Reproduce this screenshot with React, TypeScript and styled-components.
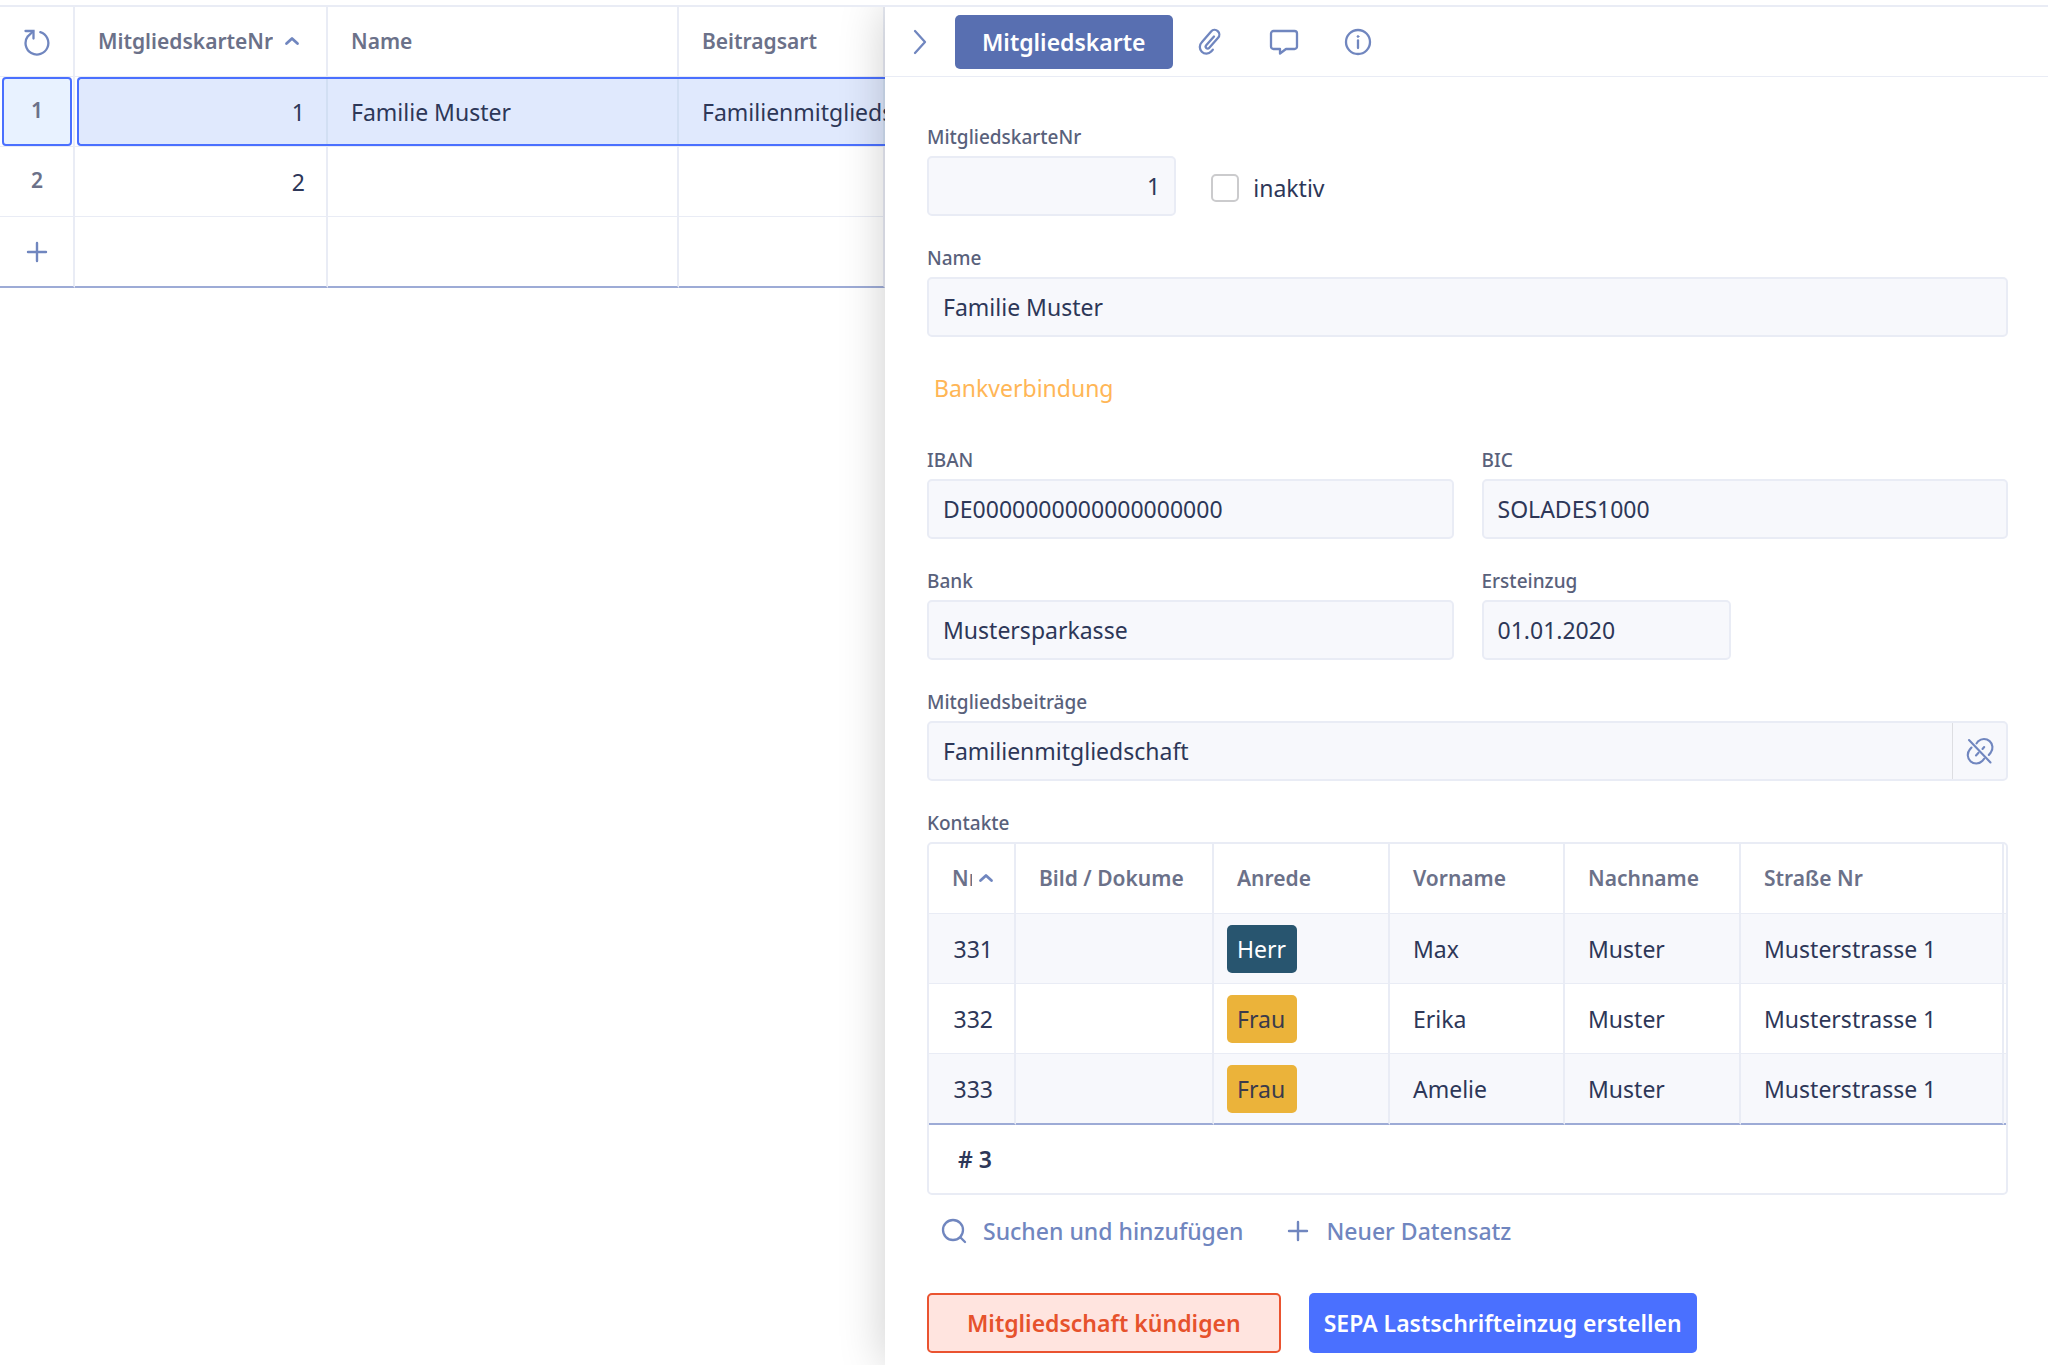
import React from "react";
import styled, { createGlobalStyle, css } from "styled-components";

const c = {
  line: "#e9ecf5",
  strongLine: "#9dabd6",
  ink: "#2d3758",
  head: "#6b7189",
  label: "#59617b",
  icon: "#7086bf",
  fieldBg: "#f7f8fc",
  accent: "#4a70ff",
};

const Global = createGlobalStyle`
  *, *::before, *::after { box-sizing: border-box; }
  body { margin: 0; background: #fff; }
  body, button, input {
    font-family: "Noto Sans", "Open Sans", sans-serif;
    font-size: 23px;
    color: ${c.ink};
  }
  button { margin: 0; padding: 0; border: 0; background: none; cursor: pointer; }
`;

const Page = styled.div`
  height: 100vh;
  padding-top: 5px;
  display: flex;
  flex-direction: column;
`;

const Workspace = styled.main`
  flex: 1;
  min-height: 0;
  display: grid;
  grid-template-columns: 885fr 1163fr;
  border-top: 2px solid ${c.line};
  overflow: hidden;
`;

const ListPane = styled.section`
  min-width: 0;
  overflow: hidden;
`;

const Panel = styled.aside`
  min-width: 0;
  min-height: 0;
  display: flex;
  flex-direction: column;
  background: #fff;
  box-shadow: 0 0 44px rgba(0, 0, 0, 0.2);
  z-index: 1;
`;

/* List on the left */

const Table = styled.table`
  width: 100%;
  table-layout: fixed;
  border-collapse: separate;
  border-spacing: 0;
`;

const Col = styled.col<{ $w?: number }>`
  width: ${(p) => (p.$w ? `${p.$w}px` : "auto")};
`;

const Th = styled.th`
  height: 70px;
  padding: 0 20px 2px 23px;
  border-right: 2px solid ${c.line};
  border-bottom: 1px solid ${c.line};
  font-size: 21px;
  font-weight: 600;
  color: ${c.head};
  text-align: left;
  white-space: nowrap;
  overflow: hidden;
`;

const Td = styled.td<{ $bare?: boolean; $last?: boolean }>`
  height: ${(p) => (p.$last ? 71 : 70)}px;
  padding: 0;
  border-right: ${(p) => (p.$bare ? "0" : `2px solid ${c.line}`)};
  border-bottom: ${(p) => (p.$last ? `2px solid ${c.strongLine}` : `1px solid ${c.line}`)};
`;

const Cell = styled.div<{ $right?: boolean; $selected?: boolean; $first?: boolean }>`
  height: ${(p) => (p.$selected ? "69px" : "auto")};
  padding: 0 21px 0 23px;
  display: flex;
  align-items: center;
  justify-content: ${(p) => (p.$right ? "flex-end" : "flex-start")};
  white-space: nowrap;
  overflow: hidden;
  ${(p) =>
    p.$selected &&
    css`
      background: #e0e9fd;
      border: solid ${c.accent};
      border-width: 2px 0;
      box-shadow: inset -2px 0 #d2dff3;
      padding-right: 23px;
    `}
  ${(p) =>
    p.$first &&
    css`
      margin-left: 2px;
      border-left-width: 2px;
      border-radius: 4px 0 0 4px;
    `}
`;

const RowNumber = styled.div<{ $selected?: boolean }>`
  height: 69px;
  margin: 0 1px 0 2px;
  padding-bottom: 4px;
  display: flex;
  align-items: center;
  justify-content: center;
  font-size: 21px;
  font-weight: 600;
  color: ${c.head};
  border: 2px solid ${(p) => (p.$selected ? c.accent : "transparent")};
  border-radius: 4px;
  background: ${(p) => (p.$selected ? "#e8f2ff" : "none")};
`;

const CornerTh = styled(Th)`
  padding: 0;
`;

const HeadRow = styled.div<{ $gap: number }>`
  display: flex;
  align-items: center;
  gap: ${(p) => p.$gap}px;

  span { overflow: hidden; }
  svg { flex: none; }
`;

const IconButton = styled.button<{ $w?: number }>`
  width: ${(p) => (p.$w ? `${p.$w}px` : "100%")};
  height: 68px;
  flex: none;
  display: flex;
  align-items: center;
  justify-content: center;
`;

/* Detail panel */

const Toolbar = styled.header`
  flex: none;
  height: 70px;
  display: flex;
  align-items: center;
  border-bottom: 1px solid ${c.line};
`;

const Tab = styled.button`
  height: 54px;
  padding: 0 27px;
  border-radius: 5px;
  background: #586fb1;
  color: #fff;
  font-size: 23px;
  font-weight: 600;
`;

const Form = styled.form`
  flex: 1;
  min-height: 0;
  padding: 45px 40px 0 42px;
  display: grid;
  grid-template-columns: repeat(4, minmax(0, 1fr));
  align-content: start;
  gap: 27px 28px;
  overflow: hidden auto;
  scrollbar-width: none;
`;

const Field = styled.div<{ $span: number }>`
  grid-column: span ${(p) => p.$span};
  min-width: 0;
`;

const labelText = css`
  display: block;
  margin-bottom: 4px;
  font-size: 19px;
  line-height: 30px;
  font-weight: 500;
  color: ${c.label};
`;

const Label = styled.label`
  ${labelText}
`;

const Caption = styled.div`
  ${labelText}
`;

const Input = styled.input<{ $right?: boolean }>`
  display: block;
  width: 100%;
  height: 60px;
  padding: 0 14px;
  border: 2px solid ${c.line};
  border-radius: 5px;
  background: ${c.fieldBg};
  text-align: ${(p) => (p.$right ? "right" : "left")};
  outline: none;
`;

const Joined = styled.div`
  display: flex;
  height: 60px;
  border: 2px solid ${c.line};
  border-radius: 5px;
  background: ${c.fieldBg};

  input {
    flex: 1;
    height: 56px;
    border: 0;
    background: none;
  }
  button {
    height: 56px;
    border-left: 1px solid #dddee2;
  }
`;

const CheckField = styled.label`
  grid-column: span 3;
  align-self: end;
  height: 60px;
  padding: 4px 0 0 7px;
  display: flex;
  align-items: center;
  gap: 14px;
`;

const Checkbox = styled.input`
  appearance: none;
  width: 28px;
  height: 28px;
  margin: 0;
  border: 2px solid #cbcbcd;
  border-radius: 5px;
  background: #fff;
`;

const SectionTitle = styled.h2`
  grid-column: 1 / -1;
  height: 54px;
  margin: 0;
  padding: 7px 7px 0;
  font-size: 23px;
  line-height: 34px;
  font-weight: 400;
  color: #ffb656;
`;

const TableFrame = styled.div`
  border: 2px solid ${c.line};
  border-radius: 5px;
  overflow: hidden;

  tbody tr:nth-child(odd) { background: ${c.fieldBg}; }
`;

const Tag = styled.span<{ $dark?: boolean }>`
  height: 48px;
  min-width: 70px;
  margin-left: -10px;
  padding: 0 10px;
  display: flex;
  align-items: center;
  border-radius: 5px;
  background: ${(p) => (p.$dark ? "#28556f" : "#ebb33a")};
  color: ${(p) => (p.$dark ? "#fff" : "#3a3a4c")};
`;

const Total = styled.td`
  height: 68px;
  padding: 0 29px;
  font-weight: 600;
`;

const LinkRow = styled.div`
  height: 71px;
  padding-left: 14px;
  display: flex;
  align-items: center;
  gap: 43px;
`;

const LinkButton = styled.button`
  display: flex;
  align-items: center;
  gap: 16px;
  font-size: 23px;
  font-weight: 500;
  color: ${c.icon};
`;

const Actions = styled.div`
  grid-column: 1 / -1;
  display: flex;
  gap: 28px;
`;

const Action = styled.button<{ $danger?: boolean }>`
  height: 60px;
  padding: 0 ${(p) => (p.$danger ? 38 : 15)}px;
  border: ${(p) => (p.$danger ? "2px solid #ea5330" : "0")};
  border-radius: 5px;
  background: ${(p) => (p.$danger ? "#ffe4df" : c.accent)};
  color: ${(p) => (p.$danger ? "#e6522c" : "#fff")};
  font-size: 23px;
  font-weight: 600;
`;

/* Icons */

const Svg = ({ w, h, sw = 2.3, children }: { w: number; h: number; sw?: number; children: React.ReactNode }) => (
  <svg width={w} height={h} viewBox={`0 0 ${w} ${h}`} fill="none" stroke={c.icon} strokeWidth={sw} strokeLinecap="round" strokeLinejoin="round" aria-hidden="true">
    {children}
  </svg>
);

const Reload = () => (
  <Svg w={28} h={28}>
    <path d="M17.300 4.200A11.400 11.400 0 1 1 4.800 8.300L10 3.500" />
    <path d="M2.500 3h8v7.500" strokeLinejoin="miter" />
  </Svg>
);
const Plus = () => (
  <Svg w={24} h={24} sw={2.4}>
    <path d="M12 3v18M3 12h18" />
  </Svg>
);
const SortUp = () => (
  <Svg w={16} h={10} sw={2.8}>
    <path d="M2.500 7.500L8 2.500l5.500 5" />
  </Svg>
);
const ChevronRight = () => (
  <Svg w={14} h={26}>
    <path d="M2 2l10 11L2 24" />
  </Svg>
);
const Clip = () => (
  <Svg w={24} h={28}>
    <path d="M16 8.500L8.200 17.300a1.900 1.900 0 0 0 2.900 2.600l9-10.200a4.700 4.700 0 0 0-7-6.300L3.800 14.200a6.800 6.800 0 0 0 0 9.600 6.500 6.500 0 0 0 9.400-.300l1.600-1.800" />
  </Svg>
);
const Comment = () => (
  <Svg w={30} h={28}>
    <path d="M4.500 3h21a2.500 2.500 0 0 1 2.500 2.500v13a2.500 2.500 0 0 1-2.500 2.500H17l-6 4.500V21H4.500A2.500 2.500 0 0 1 2 18.500v-13A2.500 2.500 0 0 1 4.500 3z" />
  </Svg>
);
const Info = () => (
  <Svg w={28} h={28}>
    <circle cx="14" cy="14" r="12" />
    <path d="M14 12.500v7.500" />
    <circle cx="14" cy="8.500" r="0.900" fill={c.icon} strokeWidth={1} />
  </Svg>
);
const Search = () => (
  <Svg w={26} h={26}>
    <circle cx="12" cy="12" r="10" />
    <path d="M19.500 19.500l4.500 4.500" />
  </Svg>
);
const Unlink = () => (
  <Svg w={28} h={28} sw={2.1}>
    <path d="M3 3l21.500 22.500" />
    <path d="M10.500 6.500l1.700-2.300a8.500 8.500 0 0 1 12.600 11.300l-2 2.500" />
    <path d="M5.500 10.500l-1.700 2a8.500 8.500 0 0 0 12.400 11.600l2-2.500" />
    <path d="M10 18.500l2.500-2.800M16.500 12l1.700-2" />
  </Svg>
);

const contacts = [
  { nr: 331, title: "Herr", first: "Max", last: "Muster", street: "Musterstrasse 1" },
  { nr: 332, title: "Frau", first: "Erika", last: "Muster", street: "Musterstrasse 1" },
  { nr: 333, title: "Frau", first: "Amelie", last: "Muster", street: "Musterstrasse 1" },
];

const MemberList = () => (
  <Table>
    <colgroup>
      <Col $w={75} />
      <Col $w={253} />
      <Col $w={351} />
      <Col />
    </colgroup>
    <thead>
      <tr>
        <CornerTh>
          <IconButton type="button" aria-label="Neu laden"><Reload /></IconButton>
        </CornerTh>
        <Th scope="col">
          <HeadRow $gap={11}><span>MitgliedskarteNr</span><SortUp /></HeadRow>
        </Th>
        <Th scope="col">Name</Th>
        <Th scope="col">Beitragsart</Th>
      </tr>
    </thead>
    <tbody>
      <tr>
        <Td><RowNumber $selected>1</RowNumber></Td>
        <Td $bare><Cell $selected $first $right>1</Cell></Td>
        <Td $bare><Cell $selected>Familie Muster</Cell></Td>
        <Td $bare><Cell $selected>Familienmitgliedschaft</Cell></Td>
      </tr>
      <tr>
        <Td><RowNumber>2</RowNumber></Td>
        <Td><Cell $right>2</Cell></Td>
        <Td />
        <Td />
      </tr>
      <tr>
        <Td $last>
          <IconButton type="button" aria-label="Neue Zeile"><Plus /></IconButton>
        </Td>
        <Td $last />
        <Td $last />
        <Td $last />
      </tr>
    </tbody>
  </Table>
);

const Contacts = () => (
  <TableFrame>
    <Table aria-labelledby="kontakte">
      <colgroup>
        <Col $w={87} />
        <Col $w={198} />
        <Col $w={176} />
        <Col $w={175} />
        <Col $w={176} />
        <Col />
        <Col $w={2} />
      </colgroup>
      <thead>
        <tr>
          <Th scope="col"><HeadRow $gap={6}><span>Nr</span><SortUp /></HeadRow></Th>
          <Th scope="col">Bild / Dokume</Th>
          <Th scope="col">Anrede</Th>
          <Th scope="col">Vorname</Th>
          <Th scope="col">Nachname</Th>
          <Th scope="col">Straße Nr</Th>
          <Td as="th" $bare />
        </tr>
      </thead>
      <tbody>
        {contacts.map((p, i) => {
          const last = i === contacts.length - 1;
          return (
            <tr key={p.nr}>
              <Td $last={last}><Cell $right>{p.nr}</Cell></Td>
              <Td $last={last} />
              <Td $last={last}><Cell><Tag $dark={p.title === "Herr"}>{p.title}</Tag></Cell></Td>
              <Td $last={last}><Cell>{p.first}</Cell></Td>
              <Td $last={last}><Cell>{p.last}</Cell></Td>
              <Td $last={last}><Cell>{p.street}</Cell></Td>
              <Td $last={last} $bare />
            </tr>
          );
        })}
      </tbody>
      <tfoot>
        <tr><Total colSpan={7}># 3</Total></tr>
      </tfoot>
    </Table>
  </TableFrame>
);

const TextField = ({ id, label, value, span, right }: { id: string; label: string; value: string; span: number; right?: boolean }) => (
  <Field $span={span}>
    <Label htmlFor={id}>{label}</Label>
    <Input id={id} type="text" defaultValue={value} $right={right} />
  </Field>
);

export default function App() {
  return (
    <>
      <Global />
      <Page>
        <Workspace>
          <ListPane>
            <MemberList />
          </ListPane>
          <Panel>
            <Toolbar>
              <IconButton type="button" $w={70} aria-label="Schließen"><ChevronRight /></IconButton>
              <Tab type="button">Mitgliedskarte</Tab>
              <IconButton type="button" $w={74} aria-label="Anhänge"><Clip /></IconButton>
              <IconButton type="button" $w={74} aria-label="Kommentare"><Comment /></IconButton>
              <IconButton type="button" $w={74} aria-label="Info"><Info /></IconButton>
            </Toolbar>
            <Form>
              <TextField id="nr" label="MitgliedskarteNr" value="1" span={1} right />
              <CheckField>
                <Checkbox type="checkbox" />
                inaktiv
              </CheckField>
              <TextField id="name" label="Name" value="Familie Muster" span={4} />
              <SectionTitle>Bankverbindung</SectionTitle>
              <TextField id="iban" label="IBAN" value="DE0000000000000000000" span={2} />
              <TextField id="bic" label="BIC" value="SOLADES1000" span={2} />
              <TextField id="bank" label="Bank" value="Mustersparkasse" span={2} />
              <TextField id="ersteinzug" label="Ersteinzug" value="01.01.2020" span={1} />
              <Field $span={4}>
                <Label htmlFor="beitrag">Mitgliedsbeiträge</Label>
                <Joined>
                  <Input id="beitrag" type="text" defaultValue="Familienmitgliedschaft" />
                  <IconButton type="button" $w={54} aria-label="Verknüpfung lösen"><Unlink /></IconButton>
                </Joined>
              </Field>
              <Field $span={4}>
                <Caption id="kontakte">Kontakte</Caption>
                <Contacts />
                <LinkRow>
                  <LinkButton type="button"><Search />Suchen und hinzufügen</LinkButton>
                  <LinkButton type="button"><Plus />Neuer Datensatz</LinkButton>
                </LinkRow>
              </Field>
              <Actions>
                <Action type="button" $danger>Mitgliedschaft kündigen</Action>
                <Action type="button">SEPA Lastschrifteinzug erstellen</Action>
              </Actions>
            </Form>
          </Panel>
        </Workspace>
      </Page>
    </>
  );
}
